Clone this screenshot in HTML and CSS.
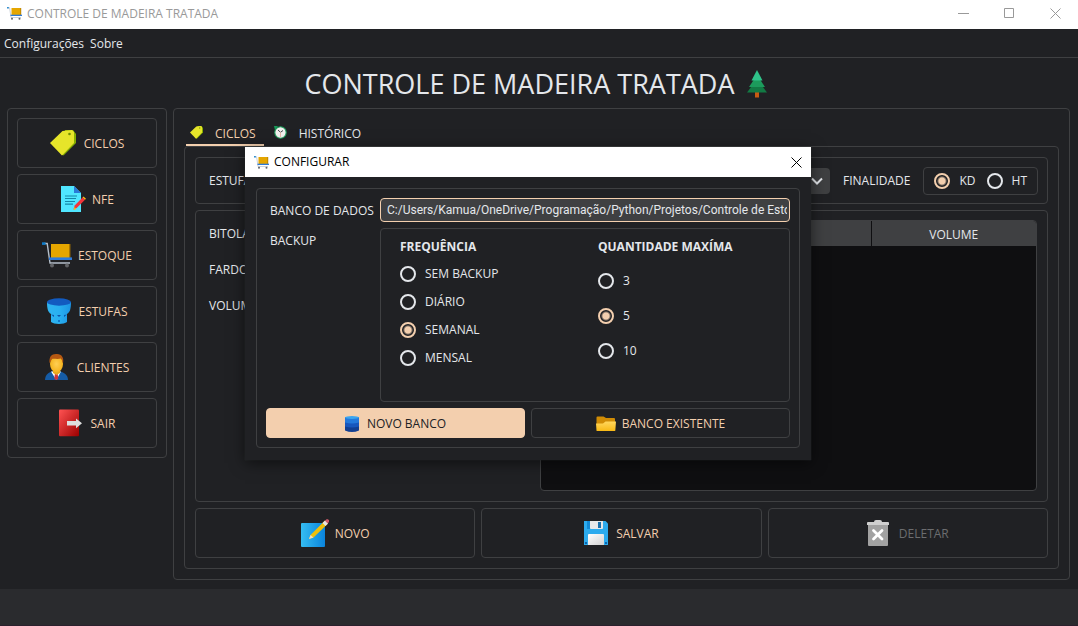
FILE: index.html
```html
<!DOCTYPE html>
<html lang="pt-BR">
<head>
<meta charset="utf-8">
<title>CONTROLE DE MADEIRA TRATADA</title>
<link rel="stylesheet" href="styles.css">
</head>
<body>
<svg class="defs" aria-hidden="true">
  <defs>
    <linearGradient id="gDoor" x1="0" y1="0" x2="1" y2="1"><stop offset="0" stop-color="#ff5252"/><stop offset="1" stop-color="#9c0000"/></linearGradient>
    <linearGradient id="gNote" x1="0" y1="0" x2="1" y2="0"><stop offset="0" stop-color="#35bdf2"/><stop offset="1" stop-color="#0a84dc"/></linearGradient>
    <linearGradient id="gFolder" x1="0" y1="0" x2="0" y2="1"><stop offset="0" stop-color="#ffd75e"/><stop offset="1" stop-color="#f8b915"/></linearGradient>
    <linearGradient id="gCup" x1="0" y1="0" x2="1" y2="0"><stop offset="0" stop-color="#2fb4f0"/><stop offset="0.5" stop-color="#29b0f0"/><stop offset="1" stop-color="#1c94e4"/></linearGradient>
    <radialGradient id="gFace"><stop offset="0" stop-color="#ffcf54"/><stop offset="1" stop-color="#f4b21c"/></radialGradient>
    <linearGradient id="gPlate" x1="0" y1="0" x2="1" y2="1"><stop offset="0" stop-color="#ffffff"/><stop offset="1" stop-color="#d2d2d2"/></linearGradient>
    <symbol id="cart" viewBox="0 0 30 26">
      <path d="M2 1.5h3.2L8 21h20" fill="none" stroke="#b4bfca" stroke-width="1.4"/>
      <rect width="3.6" height="2.6" y=".3" fill="#0f7cc9"/>
      <rect x="9" y="2" width="19" height="14" fill="#e5a600"/><rect x="27" y="2" width="1.4" height="14" fill="#a87500"/>
      <rect x="7" y="15.4" width="23" height="2.6" fill="#2d7bda"/>
      <circle cx="10" cy="23.6" r="2" fill="#626468"/><circle cx="25" cy="23.6" r="2" fill="#626468"/>
    </symbol>
    <symbol id="tag" viewBox="0 0 26 26">
      <path d="M15 0h8l3 4v9L13.5 25.5 10 23Z" fill="#86ad00"/>
      <path d="M0 13 12.5 1 22 0l2 2v11L12 25.5Z" fill="#e6e52a"/>
      <circle cx="19.5" cy="4" r="1.3" fill="#738f00"/>
    </symbol>
  </defs>
</svg>

<header class="titlebar">
  <svg class="icon-app"><use href="#cart"/></svg>
  <span class="titlebar-text">CONTROLE DE MADEIRA TRATADA</span>
  <div class="window-controls">
    <button type="button" aria-label="Minimizar"><svg viewBox="0 0 11 11"><path d="M0 5.5h11"/></svg></button>
    <button type="button" aria-label="Maximizar"><svg viewBox="0 0 11 11"><path d="M.5.5h9v9h-9z"/></svg></button>
    <button type="button" aria-label="Fechar"><svg viewBox="0 0 11 11"><path d="M.5.5l10 10M10.500 .5l-10 10"/></svg></button>
  </div>
</header>

<nav class="menubar">
  <button type="button">Configurações</button>
  <button type="button">Sobre</button>
</nav>

<main class="content">
  <h1 class="page-title">CONTROLE DE MADEIRA TRATADA
    <svg class="icon-tree" viewBox="0 0 20 28"><path d="M8 21h4v6.500H8z" fill="#c75b12"/><path d="M10 9l10 13.500H0z" fill="#127a44"/><path d="M10 5l8 12H2z" fill="#1c9b5c"/><path d="M10 0l5.500 10.500h-11z" fill="#2fc48a"/></svg>
  </h1>

  <div class="columns">
    <aside class="sidebar">
      <button type="button" class="btn btn-large"><svg class="icon-26"><use href="#tag"/></svg>CICLOS</button>
      <button type="button" class="btn btn-large btn-tight"><svg class="icon-26" viewBox="0 0 26 26"><path d="M1 0h13l7 7v19H1z" fill="#50e6ff"/><path d="M14 0l7 7h-7z" fill="#2a7bd8"/><path d="M5 10h12M5 12.500h11M5 15.500h10M5 18.200h8" stroke="#1488a8" stroke-width="1.200"/><path d="M13.500 23.500l1.200-4L22.500 11.500l2.500 2.300-8.300 8.200z" fill="#f0353b"/><path d="M22.500 11.500l1 -1 2.500 2.300-1 1zM13.500 24l1-3 2 2z" fill="#f9b515"/></svg>NFE</button>
      <button type="button" class="btn btn-large btn-tight"><svg class="icon-cart"><use href="#cart"/></svg>ESTOQUE</button>
      <button type="button" class="btn btn-large"><svg class="icon-24" viewBox="1 0 24 26"><path d="M1 4c0 7 1 10 4 12v8c3 2.500 13 2.500 16 0v-8c3-2 4-5 4-12z" fill="url(#gCup)"/><ellipse cx="13" cy="4" rx="12" ry="3.700" fill="#125bc0"/><path d="M5 16.500l3 .5v2zM11 17h4l-2 2zM21 16.500l-3 .5v2z" fill="#0d55a8"/><circle cx="13" cy="23" r="1" fill="#0b65ba"/></svg>ESTUFAS</button>
      <button type="button" class="btn btn-large"><svg class="icon-24" viewBox="1 0 24 26"><path d="M1 26c0-6 5-9 11-9s12 3 12 9z" fill="#155ba5"/><path d="M7 17.500h10L12.300 26z" fill="#fff"/><path d="M11 19h2.600l.7 6-1.800 1-2.200-1z" fill="#d0353b"/><path d="M9 15h7v4l-3.500 2L9 19z" fill="#e6a91e"/><ellipse cx="12.500" cy="10" rx="6.500" ry="8.500" fill="url(#gFace)"/><path d="M5.500 9C5 2 8-.5 13 0c5 0 7 4 6 9-1-1-1-4-2-4.500-3 1-7 0-9 .5-1 1-1 3-2.500 4z" fill="#b55812"/></svg>CLIENTES</button>
      <button type="button" class="btn btn-large"><svg class="icon-24" viewBox="1 0 24 26"><rect x="1" y="-.4" width="20" height="26.600" rx="1" fill="url(#gDoor)"/><path d="M9 11h9V8.500l6 4.700-6 5V15.500H9z" fill="#dedede"/></svg>SAIR</button>
    </aside>

    <section class="panel">
      <div class="tabs" role="tablist">
        <button type="button" role="tab" class="tab tab-active" aria-selected="true"><svg class="icon-13"><use href="#tag"/></svg>CICLOS</button>
        <button type="button" role="tab" class="tab" aria-selected="false"><svg class="icon-13" viewBox="0 0 13 13"><circle cx="6.500" cy="6.500" r="5.700" fill="#f1efed" stroke="#1b9c5a" stroke-width="1.100"/><path d="M0 0h4L1 4z" fill="#159957"/><path d="M4 4l2.500 2.300L9 4.500" fill="none" stroke="#45474a"/><path d="M6.500 6.500V11" stroke="#e8b9aa"/></svg>HISTÓRICO</button>
      </div>

      <div class="tab-page">
        <div class="group filter-row">
          <label for="estufa">ESTUFA</label>
          <select id="estufa" class="combo"><option></option></select>
          <svg class="chevron" viewBox="0 0 12 8"><path d="M1 1.500l5 5 5-5"/></svg>
          <span>FINALIDADE</span>
          <div class="group purpose">
            <label class="radio"><input type="radio" name="finalidade" checked>KD</label>
            <label class="radio"><input type="radio" name="finalidade">HT</label>
          </div>
        </div>

        <div class="group data-area">
          <div class="fields">
            <span>BITOLA</span>
            <span>FARDOS</span>
            <span>VOLUME</span>
          </div>
          <div class="table-frame">
            <table class="table">
              <thead><tr><th></th><th></th><th>VOLUME</th></tr></thead>
              <tbody></tbody>
            </table>
          </div>
        </div>

        <div class="actions">
          <button type="button" class="btn btn-large btn-tight"><svg class="icon-note" viewBox="0 0 28 28"><rect y="4" width="24" height="24" rx="1" fill="url(#gNote)"/><path d="M8 20l1.500-4L24 1.500 27 4.500 12.500 18.500z" fill="#efc00a"/><path d="M21.500 4L24 1.500 27 4.500 24.500 7z" fill="#e4e4e4"/><path d="M24 1.500L26 0l2 1v2l-1.500 1.500z" fill="#cf5b69"/><path d="M8 20l1.500-4 3 2.500z" fill="#ecdcc6"/></svg>NOVO</button>
          <button type="button" class="btn btn-large"><svg class="icon-floppy" viewBox="0 0 24 24"><path d="M0 0h21.500L24 2.500V24H0z" fill="#2cabee"/><path d="M3 0h3v8H3z" fill="#1289d4"/><path d="M6 0h13v7q0 1-1 1H7q-1 0-1-1z" fill="#e6e8ea"/><rect x="14" y="1" width="3" height="6" fill="#196fab"/><path d="M4 24V14q0-1 1-1h14q1 0 1 1v10z" fill="url(#gPlate)"/><path d="M1 21h2v2H1zM21 21h2v2h-2z" fill="#0c64ad"/></svg>SALVAR</button>
          <button type="button" class="btn btn-large" disabled><svg class="icon-trash" viewBox="0 0 22 26"><path d="M1 4h20v21q0 1-1 1H2q-1 0-1-1z" fill="#a2a2a2"/><path d="M0 3q0-1 1-1h6q0-2 2-2h4q2 0 2 2h6q1 0 1 1v2H0z" fill="#cfcfcf"/><path d="M6.500 10.500l8.500 8.500M15 10.500L6.500 19" stroke="#fff" stroke-width="2.800" stroke-linecap="round"/></svg>DELETAR</button>
        </div>
      </div>
    </section>
  </div>
</main>

<footer class="statusbar"></footer>

<div class="dialog" role="dialog" aria-labelledby="dialog-title">
  <header class="dialog-title">
    <svg class="icon-app"><use href="#cart"/></svg>
    <span id="dialog-title">CONFIGURAR</span>
    <button type="button" class="dialog-close" aria-label="Fechar"><svg viewBox="0 0 11 11"><path d="M.5.5l10 10M10.500 .5l-10 10"/></svg></button>
  </header>
  <form class="group dialog-form">
    <label class="form-label" for="banco">BANCO DE DADOS</label>
    <input id="banco" class="text-input" type="text" value="C:/Users/Kamua/OneDrive/Programação/Python/Projetos/Controle de Esto">
    <span class="form-label">BACKUP</span>
    <div class="group backup">
      <fieldset class="choices">
        <legend>FREQUÊNCIA</legend>
        <label class="radio"><input type="radio" name="freq">SEM BACKUP</label>
        <label class="radio"><input type="radio" name="freq">DIÁRIO</label>
        <label class="radio"><input type="radio" name="freq" checked>SEMANAL</label>
        <label class="radio"><input type="radio" name="freq">MENSAL</label>
      </fieldset>
      <fieldset class="choices choices-wide">
        <legend>QUANTIDADE MAXÍMA</legend>
        <label class="radio"><input type="radio" name="qtd">3</label>
        <label class="radio"><input type="radio" name="qtd" checked>5</label>
        <label class="radio"><input type="radio" name="qtd">10</label>
      </fieldset>
    </div>
    <div class="form-buttons">
      <button type="button" class="btn btn-primary"><svg class="icon-db" viewBox="0 0 14 16"><path d="M0 1.500h14v13q-7 3-14 0z" fill="#123f92"/><path d="M0 1.500h14v9q-7 2-14 0z" fill="#1857bd"/><path d="M0 1.500h14v5q-7 2-14 0z" fill="#2479db"/><ellipse cx="7" cy="1.500" rx="7" ry="1.500" fill="#3aa5f0"/></svg>NOVO BANCO</button>
      <button type="button" class="btn btn-tight"><svg class="icon-folder" viewBox="0 0 20 16"><path d="M.5 1.500q0-1 1-1h6L10 2h8q1 0 1 1v6H.500z" fill="#d08c05"/><path d="M0 7.500h7L9.500 5.500H20l-.7 9q0 .5-.8.5H1.200q-.7 0-.7-.5z" fill="url(#gFolder)"/></svg>BANCO EXISTENTE</button>
    </div>
  </form>
</div>
</body>
</html>
```

FILE: styles.css
```css
* { box-sizing: border-box; }

body {
  margin: 0;
  min-height: 100vh;
  display: flex;
  flex-direction: column;
  background: #202124;
  color: #e4e7eb;
  font: 12px/16px "Open Sans", "Noto Sans", sans-serif;
}

button, input, select { font: inherit; color: inherit; }
button { background: none; border: 0; padding: 0; }
svg { flex: none; overflow: visible; }
.defs { position: absolute; width: 0; height: 0; }

.icon-app { width: 15px; height: 13px; }
.icon-13 { width: 13px; height: 13px; }
.icon-24 { width: 24px; height: 26px; }
.icon-26 { width: 26px; height: 26px; }
.icon-cart { width: 30px; height: 26px; }
.icon-note { width: 28px; height: 28px; }
.icon-floppy { width: 24px; height: 24px; }
.icon-trash { width: 22px; height: 26px; }
.icon-db { width: 14px; height: 16px; }
.icon-folder { width: 20px; height: 16px; }
.icon-tree { width: 20px; height: 28px; }

/* Window chrome */
.titlebar {
  display: flex;
  align-items: center;
  gap: 5px;
  height: 29px;
  padding: 0 0 2px 7px;
  background: #fff;
  color: #999;
}
.window-controls { display: flex; margin-left: auto; }
.window-controls button { width: 46px; height: 27px; display: grid; place-items: center; }
.window-controls svg, .dialog-close svg { width: 11px; height: 11px; fill: none; stroke: #999; }

.menubar {
  display: flex;
  gap: 6px;
  height: 29px;
  padding: 1px 4px 0;
  border-bottom: 1px solid #3f4042;
}

/* Page */
.content { flex: 1; padding: 0 8px 9px 7px; display: flex; flex-direction: column; }
.page-title {
  display: flex;
  justify-content: center;
  align-items: center;
  gap: 12px;
  height: 50px;
  margin: 0;
  padding: 2px 6px 0 0;
  font: 400 27px/36px "Open Sans", "Noto Sans", sans-serif;
}
.columns { flex: 1; display: flex; align-items: flex-start; gap: 6px; }

.group, .sidebar, .panel, .tab-page, .btn {
  border: 1px solid #3f4042;
  border-radius: 4px;
}
.sidebar { width: 160px; padding: 9px; display: flex; flex-direction: column; gap: 6px; }

.btn {
  display: flex;
  align-items: center;
  justify-content: center;
  gap: 8px;
  height: 30px;
  padding-top: 1px;
  color: #f3cfae;
}
.btn svg { margin-bottom: 2px; }
.btn-large { height: 50px; }
.btn-tight { gap: 6px; }
.btn:disabled { color: #6c6d6f; gap: 10px; }
.btn-primary { background: #f3cfae; border-color: #f3cfae; color: #202124; }
.form-buttons .btn { flex: 1; }
.form-buttons svg { margin-bottom: 0; }

.panel {
  flex: 1;
  align-self: stretch;
  display: flex;
  flex-direction: column;
  padding: 13px 10px 10px;
}
.tabs { display: flex; gap: 6px; padding-left: 2px; }
.tab {
  display: flex;
  align-items: center;
  gap: 12px;
  height: 24px;
  padding: 2px 8px 0 4px;
  border-bottom: 2px solid transparent;
}
.tab svg { margin-bottom: 4px; }
.tab-active { color: #f3cfae; border-color: #f3cfae; }
.tab-page { flex: 1; display: flex; flex-direction: column; gap: 6px; padding: 10px; }

.filter-row { display: flex; align-items: center; height: 47px; padding: 1px 9px 0 13px; }
.combo {
  appearance: none;
  flex: 1;
  height: 26px;
  margin-left: 16px;
  border: 0;
  border-radius: 4px;
  background: #3f4042;
}
.chevron { width: 12px; height: 8px; margin: 0 20px 0 -19px; fill: none; stroke: #e4e7eb; stroke-width: 2; }
.purpose { display: flex; gap: 11px; height: 28px; margin-left: 13px; padding: 0 10px; }

.radio { display: flex; align-items: center; gap: 9px; }
.radio input {
  appearance: none;
  width: 16px;
  height: 16px;
  margin: 0;
  border: 2px solid #e4e7eb;
  border-radius: 50%;
}
.radio input:checked {
  border-color: #f3cfae;
  background: radial-gradient(circle, #f3cfae 3px, transparent 5px);
}

.data-area { flex: 1; display: flex; justify-content: space-between; padding: 9px 10px 10px 13px; }
.fields { display: flex; flex-direction: column; gap: 20px; padding-top: 6px; }
.table-frame {
  width: 60%;
  border: 1px solid #3f4042;
  border-radius: 4px;
  background: #0f0f11;
  overflow: hidden;
}
.table { width: 100%; table-layout: fixed; border-collapse: collapse; }
.table th { height: 25px; padding: 2px 0 0; background: #3f4042; font-weight: 400; }
.table th + th { border-left: 1px solid #0f0f11; }

.actions { display: grid; grid-template-columns: repeat(3, 1fr); gap: 6px; }
.statusbar { height: 37px; background: #2a2b2e; border-bottom: 1px solid #2b202d; }

/* Floating configuration window */
.dialog {
  position: absolute;
  left: 245px;
  top: 147px;
  width: 566px;
  background: #202124;
  box-shadow: 0 3px 14px rgba(0, 0, 0, 0.55), 0 0 1px #3f4042;
}
.dialog-title {
  display: flex;
  align-items: center;
  gap: 5px;
  height: 30px;
  padding: 0 9px;
  background: #fff;
  color: #000;
}
.dialog-close { display: grid; place-items: center; margin-left: auto; width: 12px; height: 28px; }
.dialog-close svg { stroke: #000; }
.dialog-form {
  display: grid;
  grid-template-columns: 108px 1fr;
  gap: 6px;
  margin: 11px 11px 12px;
  padding: 9px;
}
.form-label { padding: 5px 0 0 4px; }
.text-input {
  width: 100%;
  height: 24px;
  padding: 0 2px 0 6px;
  border: 1px solid #f3cfae;
  border-radius: 4px;
  background: #3f4042;
  outline: 0;
  font-family: Roboto, "Open Sans", sans-serif;
}
.backup { display: grid; grid-template-columns: 198px 1fr; height: 174px; padding: 10px 19px 8px; }
.choices { display: flex; flex-direction: column; gap: 12px; margin: 0; padding: 0; border: 0; }
.choices legend { padding: 0; margin-bottom: 11px; font-weight: 700; }
.choices-wide { gap: 19px; }
.choices-wide legend { margin-bottom: 18px; }
.form-buttons { grid-column: 1 / -1; display: flex; gap: 6px; }
```
